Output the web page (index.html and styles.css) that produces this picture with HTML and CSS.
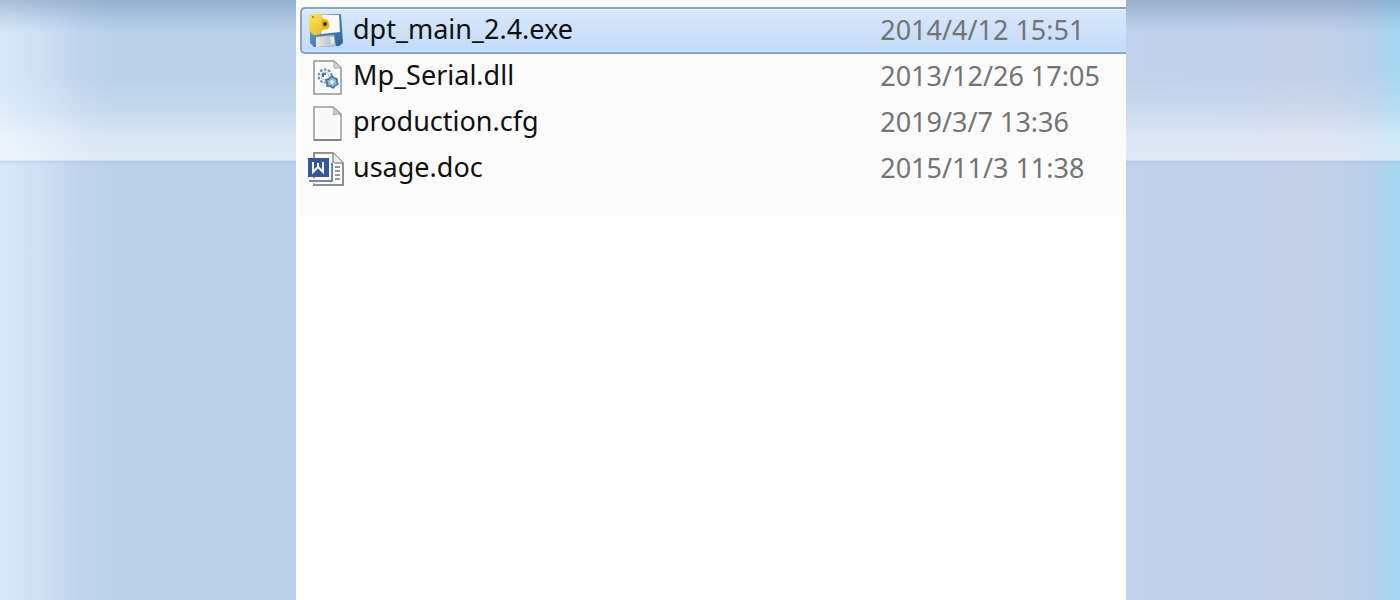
FILE: index.html
```html
<!DOCTYPE html>
<html lang="en">
<head>
<meta charset="utf-8">
<meta name="viewport" content="width=device-width, initial-scale=1">
<title>Files</title>
<link rel="stylesheet" href="styles.css">
</head>
<body class="desktop">
<main class="window">
<table class="files" aria-label="Files">
<tbody>
<tr class="file file-selected" aria-selected="true">
<td class="name"><div class="label">
<svg class="icon" viewBox="0 0 36 36" aria-hidden="true">
<defs>
<linearGradient id="disk" x2="1" y2="1"><stop offset="0" stop-color="#75a5cf"/><stop offset="1" stop-color="#286293"/></linearGradient>
<linearGradient id="snake" x2="1" y2="1"><stop offset="0" stop-color="#ffe957"/><stop offset="1" stop-color="#e5ad16"/></linearGradient>
<linearGradient id="shutter" x2="1"><stop offset="0" stop-color="#e6e8e9"/><stop offset="1" stop-color="#b1babf"/></linearGradient>
</defs>
<path d="M2 2 33 1 35 30 31 33 6 34 2 30Z" fill="url(#disk)"/>
<path d="M14 2 31 2 32 19 13 21Z" fill="#f7faf9"/>
<path d="M8 24 26 22 28 33 8 34Z" fill="url(#shutter)"/>
<path d="M22 24 26 24 26 31 23 31Z" fill="#e3e8e9"/>
<path d="M1 5Q2 1 7 1 14-1 15 5L20 7Q22 10 21 15L17 17Q14 16 13 20 9 24 4 21L1 16Z" fill="url(#snake)"/>
<path d="M14 7Q18 6 20 9L20 15 14 15Z" fill="#d9b52d"/>
<circle cx="17" cy="11" r="2" fill="#373519"/>
<circle cx="5" cy="4" r="1" fill="#8b792d"/>
</svg>
<span>dpt_main_2.4.exe</span></div></td>
<td class="date">2014/4/12 15:51</td>
</tr>
<tr class="file">
<td class="name"><div class="label">
<svg class="icon" viewBox="0 0 36 36" aria-hidden="true">
<path d="M6 2H26L33 9V35H6Z" fill="#fcfdfd" stroke="#929292" stroke-width="1.5"/>
<path d="M26 2V9H33Z" fill="#d8d8d8" stroke="#a5a5a5"/>
<circle cx="17" cy="17" r="6.5" fill="#f4f9fc" stroke="#5c8ab2" stroke-width="2" stroke-dasharray="2.6 1.5"/>
<circle cx="17" cy="17" r="4" fill="none" stroke="#a5c5dc"/>
<path d="M15 18V15H18" fill="none" stroke="#284d77" stroke-width="1.5"/>
<path d="m24 17 2 2 3 1 0 3 1 2-3 2-2 2-3-2-3 0 0-4-1-2 3-1Z" fill="#8db8da" stroke="#3f70a0" stroke-width="1.5"/>
<circle cx="24" cy="23" r="2" fill="#e1f2fb"/>
</svg>
<span>Mp_Serial.dll</span></div></td>
<td class="date">2013/12/26 17:05</td>
</tr>
<tr class="file">
<td class="name"><div class="label">
<svg class="icon" viewBox="0 0 36 36" aria-hidden="true">
<path d="M6 2H25L33 9V35H6Z" fill="#f8f8f8" stroke="#999" stroke-width="1.5"/>
<path d="M8 4H23V11H31V33H8Z" fill="none" stroke="#fff" stroke-width="1.5"/>
<path d="M25 2Q27 6 25 10 29 8 33 10Z" fill="#cfcfcf" stroke="#a5a5a5"/>
<path d="M6 35H33" stroke="#858585" stroke-width="2"/>
</svg>
<span>production.cfg</span></div></td>
<td class="date">2019/3/7 13:36</td>
</tr>
<tr class="file">
<td class="name"><div class="label">
<svg class="icon" viewBox="0 0 36 36" aria-hidden="true">
<path d="M6 2H25L35 12V34H6Z" fill="#fff" stroke="#909090" stroke-width="2"/>
<path d="M25 2V12H35" fill="#eee" stroke="#929292" stroke-width="1.5"/>
<path d="M27 16H32M27 20H32M27 24H32M27 28H32" stroke="#777" stroke-width="1.5"/>
<path d="M1 30H24V12" fill="none" stroke="#fff" stroke-width="5"/>
<path d="M1 30H24V12" fill="none" stroke="#425f9c" stroke-width="1.5"/>
<path d="M0 7H21V26H0Z" fill="#35569c"/>
<path d="M5 11V21L10 16 15 21V11M10 12V16" fill="none" stroke="#fff" stroke-width="2"/>
</svg>
<span>usage.doc</span></div></td>
<td class="date">2015/11/3 11:38</td>
</tr>
</tbody>
</table>
</main>
</body>
</html>
```
FILE: styles.css
```css
* { box-sizing: border-box; }

.desktop {
  margin: 0;
  min-height: 100vh;
  display: grid;
  grid-template-columns: 296fr 830fr 274fr;
  font-family: "Noto Sans", "Open Sans", sans-serif;
  background:
    linear-gradient(to bottom, rgba(70, 105, 145, .32) 0, rgba(100, 140, 180, .2) 16px, rgba(120, 165, 210, 0) 32px, rgba(255, 255, 255, 0) 75px, rgba(255, 255, 255, .2) 112px, rgba(255, 255, 255, .45) 135px, rgba(255, 255, 255, .55) 160px, rgba(160, 195, 225, .3) 161px, transparent 166px),
    linear-gradient(to right, #d9e8f7 0, #d2e2f5 2%, #cadbf1 4%, #bfd4ec 6%, #b9d1e9 8%, #b9d1e9 21%, #c0d1eb 80%, #c0d0ea 89%, #c4cfe7 92%, #c3cfe8 95%, #b7d0ea 98%, #a5d8f0 100%);
}

.window {
  grid-column: 2;
  min-width: 0;
  padding-left: 4px;
  background: #fff;
}

.files {
  width: 100%;
  table-layout: fixed;
  border-spacing: 0;
  border-collapse: separate;
  padding: 7px 0 24px;
  background: #fcfcfc;
}

.file td {
  height: 46px;
  padding: 0;
  white-space: nowrap;
  vertical-align: middle;
  font-size: 27px;
}

.file .name {
  width: 70%;
  padding-left: 8px;
  color: #101010;
  line-height: 32px;
}

.file .date {
  padding: 0 0 2px 2px;
  color: #737373;
  line-height: 36px;
}

.label {
  display: flex;
  align-items: flex-start;
  gap: 9px;
}

.icon {
  width: 36px;
  height: 36px;
  flex: none;
}

.file-selected td {
  height: 47px;
  border-top: 2px solid #86a5c5;
  border-bottom: 2px solid #86a5c5;
  background: linear-gradient(#dbe8fa, #c0dbf8);
  box-shadow: inset 0 1px #edf5ff, inset 0 -1px #d3e7fc;
}

.file-selected .name {
  padding-left: 6px;
  border-left: 2px solid #86a5c5;
  border-radius: 5px 0 0 5px;
}
```
